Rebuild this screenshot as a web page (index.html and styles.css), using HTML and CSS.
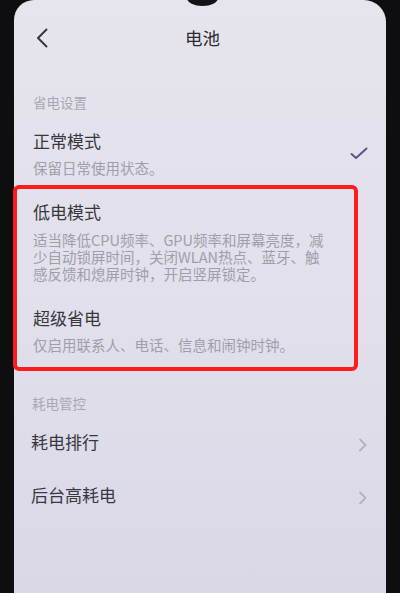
FILE: index.html
```html
<!DOCTYPE html>
<html lang="zh-CN">
<head>
<meta charset="utf-8">
<title>电池</title>
<link rel="stylesheet" href="styles.css">
</head>
<body>
<div class="device">
  <div class="screen">
    <div class="notch"></div>
    <div class="status"></div>
    <header class="header">
      <svg class="back" width="14" height="20" viewBox="0 0 14 20"><path d="M10.5 1.5 L2 10 L10.5 18.5" fill="none" stroke="#35343a" stroke-width="1.9" stroke-linecap="round" stroke-linejoin="round"/></svg>
      <h1 class="title">电池</h1>
    </header>

    <div class="section-label first">省电设置</div>

    <div class="item row">
      <div class="item-text">
        <div class="item-title">正常模式</div>
        <div class="item-desc">保留日常使用状态。</div>
      </div>
      <svg class="check" width="18" height="14" viewBox="0 0 18 14"><path d="M1.5 7 L6 11 L16.5 1.5" fill="none" stroke="#5a5486" stroke-width="2" stroke-linecap="round" stroke-linejoin="round"/></svg>
    </div>

    <div class="item low">
      <div class="item-title">低电模式</div>
      <div class="item-desc multi">适当降低CPU频率、GPU频率和屏幕亮度，减少自动锁屏时间，关闭WLAN热点、蓝牙、触感反馈和熄屏时钟，开启竖屏锁定。</div>
    </div>

    <div class="item super">
      <div class="item-title">超级省电</div>
      <div class="item-desc">仅启用联系人、电话、信息和闹钟时钟。</div>
    </div>

    <div class="highlight"></div>

    <div class="section-label second">耗电管控</div>

    <div class="link row rank">
      <div class="item-title">耗电排行</div>
      <svg class="chev" width="10" height="14" viewBox="0 0 10 14"><path d="M2 1.5 L7.5 7 L2 12.5" fill="none" stroke="#b4b2bf" stroke-width="1.8" stroke-linecap="round" stroke-linejoin="round"/></svg>
    </div>

    <div class="link row bg">
      <div class="item-title">后台高耗电</div>
      <svg class="chev" width="10" height="14" viewBox="0 0 10 14"><path d="M2 1.5 L7.5 7 L2 12.5" fill="none" stroke="#b4b2bf" stroke-width="1.8" stroke-linecap="round" stroke-linejoin="round"/></svg>
    </div>
  </div>
</div>
</body>
</html>
```

FILE: styles.css
```css
html, body {
  margin: 0;
  padding: 0;
}
body {
  width: 400px;
  height: 593px;
  background: #0e0d10;
  overflow: hidden;
  font-family: "Noto Sans CJK SC", "Noto Sans", sans-serif;
}
.device {
  width: 400px;
  height: 593px;
  padding-left: 14px;
  box-sizing: border-box;
}
.screen {
  position: relative;
  width: 372px;
  height: 593px;
  border-radius: 20px 22px 0 0;
  background: linear-gradient(180deg, #e6e5ee 0%, #e1e0eb 50%, #dad8e7 100%);
  padding-left: 19px;
  padding-right: 18px;
  box-sizing: border-box;
}
.notch {
  position: absolute;
  left: 173px;
  top: -10px;
  width: 31px;
  height: 16px;
  border-radius: 50%;
  background: #151318;
}
.status {
  height: 18px;
}
.header {
  position: relative;
  height: 40px;
  display: flex;
  align-items: center;
  justify-content: center;
}
.back {
  position: absolute;
  left: 3px;
  top: 10px;
}
.title {
  margin: 0;
  font-size: 17.5px;
  font-weight: 400;
  color: #2c2b31;
  line-height: 22px;
  margin-left: 4px;
}
.section-label {
  font-size: 13.5px;
  line-height: 20px;
  color: #a9a7b2;
}
.section-label.first {
  margin-top: 34px;
}
.section-label.second {
  margin-top: 39px;
  margin-left: -1px;
}
.item-title {
  font-size: 17px;
  line-height: 22px;
  color: #38373d;
}
.item-desc {
  font-size: 14.5px;
  line-height: 18px;
  color: #a09eaa;
  margin-top: 7px;
}
.item-desc.multi {
  line-height: 17px;
  margin-top: 8px;
  width: 297px;
}
.row {
  display: flex;
  align-items: center;
  justify-content: space-between;
}
.item.row {
  margin-top: 18px;
}
.check {
  margin-top: 0px;
}
.item.low {
  margin-top: 24px;
}
.item.super {
  margin-top: 25px;
}
.highlight {
  position: absolute;
  left: -1px;
  top: 185px;
  width: 345px;
  height: 186px;
  box-sizing: border-box;
  border: 4px solid #ff1c1c;
  border-radius: 6px;
}
.link {
  margin-left: -2px;
}
.link.rank {
  margin-top: 18px;
}
.link.bg {
  margin-top: 31px;
}
.chev {
  margin-top: 5px;
}
```
